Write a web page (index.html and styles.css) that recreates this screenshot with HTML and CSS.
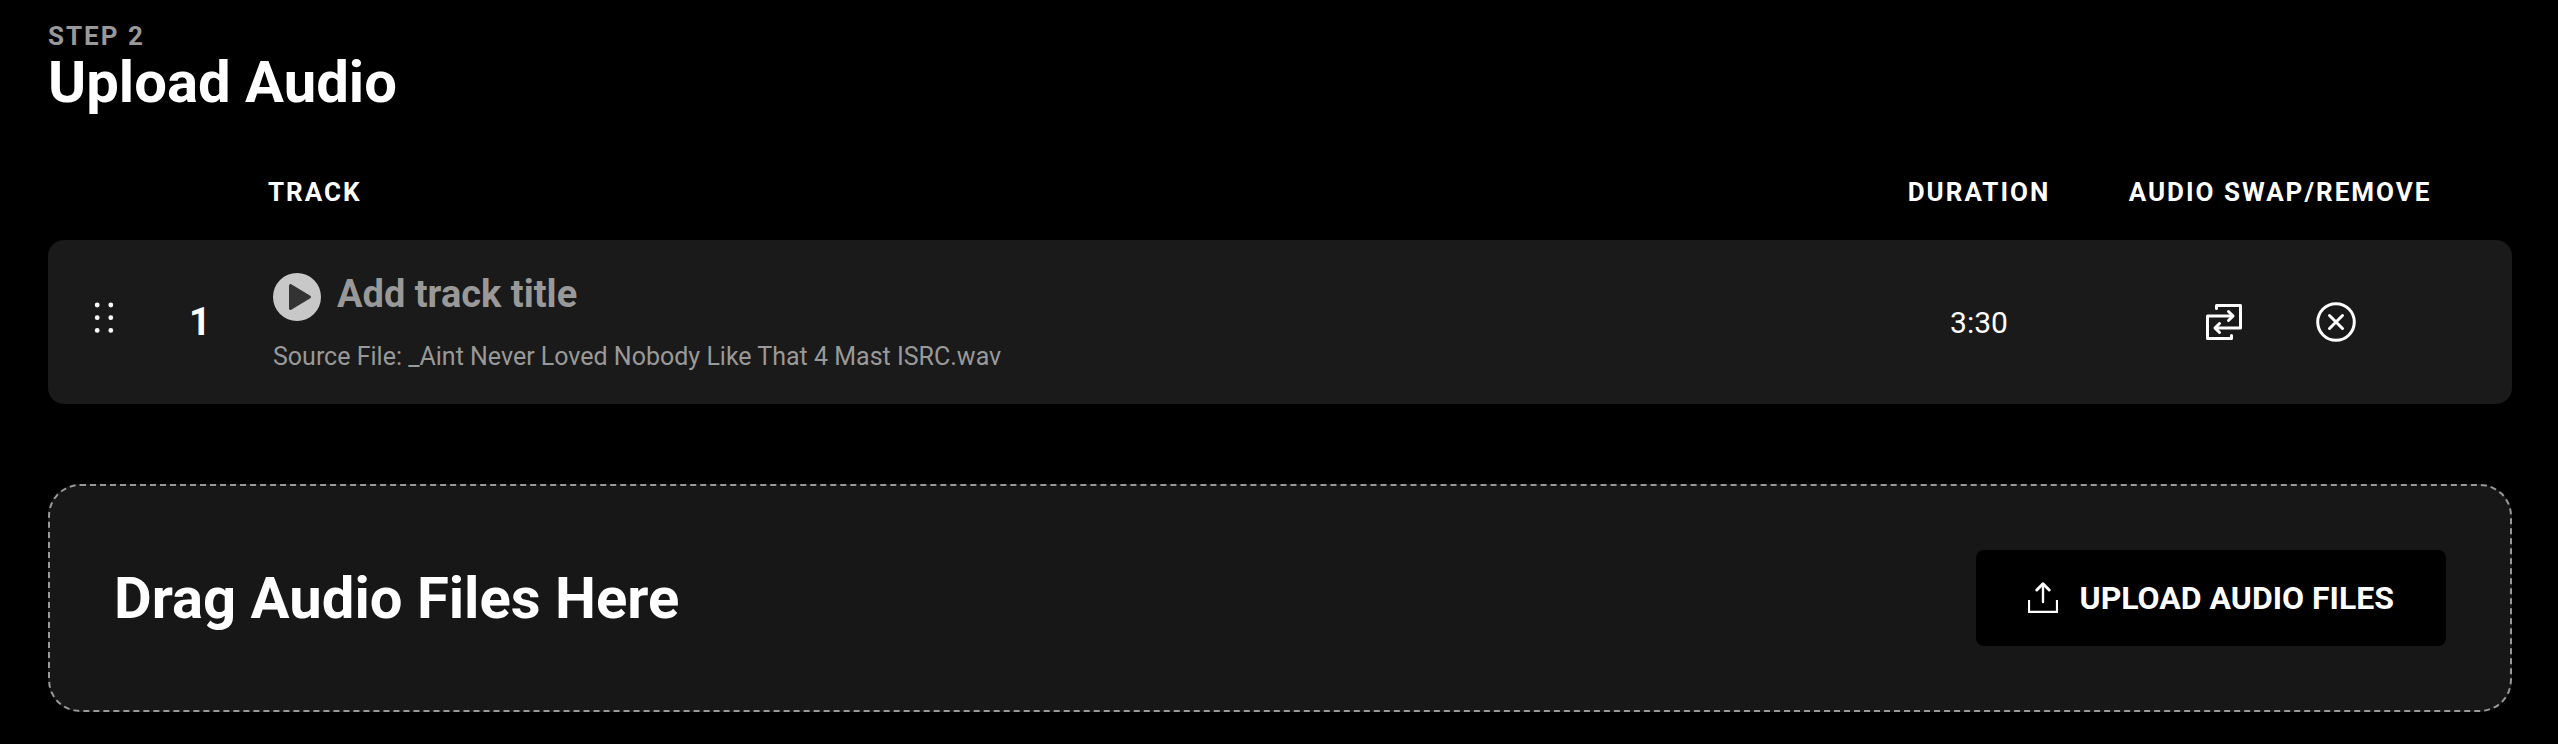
FILE: index.html
```html
<!DOCTYPE html>
<html lang="en">
  <head>
    <meta charset="UTF-8" />
    <meta name="viewport" content="width=device-width, initial-scale=1.0" />
    <title>Upload Audio</title>
    <link rel="stylesheet" href="styles.css">
  </head>
  <body>
    <header class="step-header">
      <p class="step-label">STEP 2</p>
      <h1>Upload Audio</h1>
    </header>

    <table class="track-table">
      <thead>
        <tr>
          <th class="col-drag"></th>
          <th class="col-number"></th>
          <th class="col-track">TRACK</th>
          <th class="col-duration">DURATION</th>
          <th class="col-actions">AUDIO SWAP/REMOVE</th>
          <th class="col-end"></th>
        </tr>
      </thead>
      <tbody>
        <tr>
          <td class="col-drag">
            <button type="button" class="icon-button" aria-label="Reorder track">
              <svg width="20" height="36" viewBox="0 0 20 36" fill="#fff">
                <circle cx="3.2" cy="3" r="2.4" />
                <circle cx="16.8" cy="3" r="2.4" />
                <circle cx="3.2" cy="15.7" r="2.4" />
                <circle cx="16.8" cy="15.7" r="2.4" />
                <circle cx="3.2" cy="28.4" r="2.4" />
                <circle cx="16.8" cy="28.4" r="2.4" />
              </svg>
            </button>
          </td>
          <td class="col-number">1</td>
          <td class="col-track">
            <div class="track-info">
              <div class="track-title">
                <button type="button" class="icon-button" aria-label="Play track">
                  <svg width="48" height="48" viewBox="0 0 48 48">
                    <circle cx="24" cy="24" r="24" fill="#c8c8c8" />
                    <path d="M17.5 12.5L36.5 24L17.5 35.5Z" fill="#333" stroke="#333" stroke-width="3" stroke-linejoin="round" />
                  </svg>
                </button>
                <input type="text" name="title" id="title" placeholder="Add track title" aria-label="Track title" />
              </div>
              <p class="source-file">Source File: _Aint Never Loved Nobody Like That 4 Mast ISRC.wav</p>
            </div>
          </td>
          <td class="col-duration">3:30</td>
          <td class="col-actions">
            <div class="actions">
              <button type="button" class="icon-button" aria-label="Swap audio">
                <svg width="40" height="40" viewBox="0 0 40 40" fill="none" stroke="#fff" stroke-width="3" stroke-linecap="round" stroke-linejoin="round">
                  <path d="M12.5 6.5V3.5H36.5V26H11.5" />
                  <path d="M28.5 14H3.5V36.5H27.5V33.5" />
                  <path d="M24.5 9.5L29 14L24.5 18.5" />
                  <path d="M15.5 21.5L11 26L15.5 30.5" />
                </svg>
              </button>
              <button type="button" class="icon-button" aria-label="Remove audio">
                <svg width="40" height="40" viewBox="0 0 40 40" fill="none" stroke="#fff" stroke-width="3" stroke-linecap="round">
                  <circle cx="20" cy="20" r="18.3" />
                  <path d="M13.5 13.5L26.5 26.5M26.5 13.5L13.5 26.5" />
                </svg>
              </button>
            </div>
          </td>
          <td class="col-end"></td>
        </tr>
      </tbody>
    </table>

    <section class="drop-zone">
      <h2>Drag Audio Files Here</h2>
      <button type="button" class="upload-button">
        <svg width="30" height="32" viewBox="0 0 30 32" fill="none" stroke="#fff">
          <path d="M1 18V29.8H29V18" stroke-width="2.2" />
          <path d="M15 20V2" stroke-width="2.4" stroke-linecap="round" />
          <path d="M8.8 8L15 1.8L21.2 8" stroke-width="3" stroke-linecap="round" stroke-linejoin="round" />
        </svg>
        UPLOAD AUDIO FILES
      </button>
    </section>
  </body>
</html>
```
FILE: styles.css
```css
* {
  margin: 0;
  padding: 0;
  box-sizing: border-box;
}

body {
  font-family: Roboto, "Liberation Sans", sans-serif;
  background: #000;
  color: #fff;
  padding: 22px 46px 32px 48px;
}

.step-label {
  color: #999;
  font-size: 26px;
  font-weight: 700;
  line-height: 28px;
  letter-spacing: 2px;
}

h1,
h2 {
  font-size: 58px;
  font-weight: 700;
  line-height: 64px;
}

.track-table {
  width: 100%;
  margin-top: 30px;
  table-layout: fixed;
  border-collapse: separate;
  border-spacing: 0;
}

th {
  height: 96px;
  font-size: 26px;
  font-weight: 700;
  letter-spacing: 2px;
  white-space: nowrap;
}

td {
  height: 164px;
  background: #1a1a1a;
  text-align: center;
}

td:first-child {
  border-radius: 16px 0 0 16px;
}

td:last-child {
  border-radius: 0 16px 16px 0;
}

.col-drag {
  width: 112px;
}

.col-number {
  width: 80px;
  font-size: 38px;
  font-weight: 700;
}

.col-track {
  padding-left: 28px;
  text-align: left;
}

.col-duration {
  width: 266px;
}

.col-actions {
  width: 336px;
}

.col-end {
  width: 64px;
}

td.col-duration {
  font-size: 30px;
}

.icon-button {
  border: none;
  background: none;
  cursor: pointer;
}

.icon-button svg {
  display: block;
}

.track-info {
  padding-left: 5px;
}

.track-title {
  display: flex;
  gap: 16px;
}

.track-title input {
  flex: 1;
  height: 42px;
  border: none;
  outline: none;
  background: none;
  color: #fff;
  font-family: inherit;
  font-size: 38px;
  font-weight: 700;
}

.track-title input::placeholder {
  color: #999;
}

.source-file {
  margin-top: 22px;
  color: #999;
  font-size: 25px;
  line-height: 28px;
}

.actions {
  display: flex;
  justify-content: center;
  gap: 72px;
}

.drop-zone {
  display: flex;
  align-items: center;
  justify-content: space-between;
  margin-top: 80px;
  padding: 64px;
  border: 2px dashed #999;
  border-radius: 32px;
  background: #171717;
}

.upload-button {
  display: flex;
  align-items: center;
  gap: 22px;
  padding: 30px 52px;
  border: none;
  border-radius: 8px;
  background: #000;
  color: #fff;
  font-family: inherit;
  font-size: 32px;
  font-weight: 700;
  line-height: 36px;
  cursor: pointer;
}
```
